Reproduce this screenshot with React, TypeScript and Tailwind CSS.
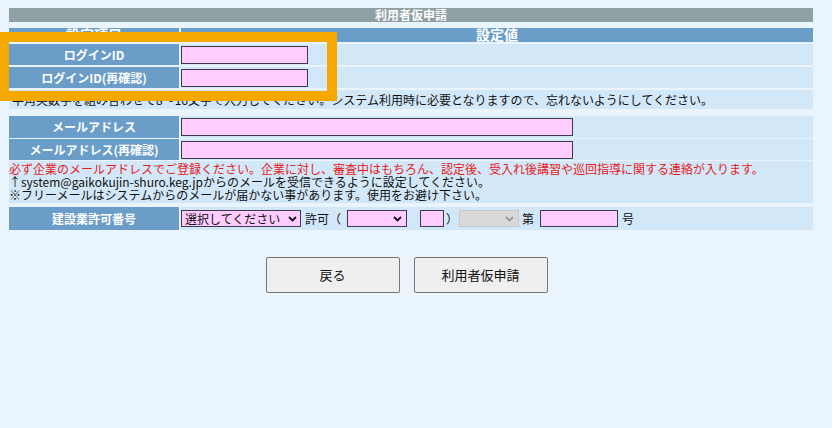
import React from 'react';

const FONT = { fontFamily: '"Noto Sans CJK JP", "Noto Sans", sans-serif' };

const Chevron: React.FC<{ color?: string }> = ({ color = '#111' }) => (
  <svg width="9" height="6" viewBox="0 0 9 6" className="shrink-0">
    <path d="M1 1 L4.5 4.5 L8 1" fill="none" stroke={color} strokeWidth="1.8" />
  </svg>
);

const PinkInput: React.FC<{ className?: string }> = ({ className = '' }) => (
  <div className={`h-[18px] border border-[#3c3a4c] bg-[#ffccff] ${className}`} />
);

const LabelCell: React.FC<{ children: React.ReactNode }> = ({ children }) => (
  <div className="w-[170px] shrink-0 bg-[#6a9ec8] flex items-center justify-center text-white font-bold text-[12px] leading-none">
    {children}
  </div>
);

const Row: React.FC<{ label: string; h: string; children: React.ReactNode }> = ({ label, h, children }) => (
  <div className={`flex gap-[2px] ${h}`}>
    <LabelCell>{label}</LabelCell>
    <div className="flex-1 bg-[#d2e7f8] flex items-center">{children}</div>
  </div>
);

export default function App() {
  return (
    <div className="relative w-[832px] h-[428px] bg-[#eaf4fd] overflow-hidden text-[#111]" style={FONT}>
      <div className="w-[804px] ml-[9px] pt-[8px] flex flex-col">
        {/* タイトル */}
        <div className="h-[14px] bg-[#8fa1a5] text-white font-bold text-[12px] leading-[14px] text-center">
          利用者仮申請
        </div>

        {/* ログインID */}
        <div className="mt-[6px] flex flex-col gap-[2px]">
          <div className="flex gap-[2px] h-[14px]">
            <div className="w-[170px] shrink-0 bg-[#6a9ec8] text-white font-bold text-[14px] leading-[12px] text-center">
              設定項目
            </div>
            <div className="flex-1 bg-[#6a9ec8] text-white font-bold text-[14px] leading-[12px] text-center">
              設定値
            </div>
          </div>
          <Row label="ログインID" h="h-[21px]">
            <PinkInput className="w-[127px]" />
          </Row>
          <Row label="ログインID(再確認)" h="h-[21px]">
            <PinkInput className="w-[127px]" />
          </Row>
          <div className="h-[19px] bg-[#d2e7f8] pl-[3px] text-[12px] leading-[19px] whitespace-nowrap">
            半角英数字を組み合わせて8～16文字で入力してください。システム利用時に必要となりますので、忘れないようにしてください。
          </div>
        </div>

        {/* メールアドレス */}
        <div className="mt-[7px] flex flex-col gap-[1px]">
          <Row label="メールアドレス" h="h-[22px]">
            <PinkInput className="w-[392px]" />
          </Row>
          <Row label="メールアドレス(再確認)" h="h-[21px]">
            <PinkInput className="w-[392px]" />
          </Row>
          <div className="h-[42px] bg-[#d2e7f8] pt-[1px] text-[12px] leading-[13px] whitespace-nowrap">
            <div className="text-[#e61a1a]">
              必ず企業のメールアドレスでご登録ください。企業に対し、審査中はもちろん、認定後、受入れ後講習や巡回指導に関する連絡が入ります。
            </div>
            <div>↑system@gaikokujin-shuro.keg.jpからのメールを受信できるように設定してください。</div>
            <div>※フリーメールはシステムからのメールが届かない事があります。使用をお避け下さい。</div>
          </div>
        </div>

        {/* 建設業許可番号 */}
        <div className="mt-[4px] flex gap-[2px] h-[23px]">
          <LabelCell>建設業許可番号</LabelCell>
          <div className="flex-1 bg-[#d2e7f8] flex items-center text-[12px] leading-none">
            <div className="w-[120px] h-[17px] border border-[#3c3a4c] bg-[#ffccff] flex items-center justify-between pl-[3px] pr-[3px]">
              <span>選択してください</span>
              <Chevron />
            </div>
            <span className="ml-[4px]">許可（</span>
            <div className="ml-[6px] w-[60px] h-[17px] border border-[#3c3a4c] bg-[#ffccff] flex items-center justify-end pr-[4px]">
              <Chevron />
            </div>
            <PinkInput className="ml-[13px] w-[24px] !h-[17px]" />
            <span className="ml-[2px]">）</span>
            <div className="ml-[1px] w-[60px] h-[17px] border border-[#c8c8c8] bg-[#d9d9d9] flex items-center justify-end pr-[4px]">
              <Chevron color="#9a9a9a" />
            </div>
            <span className="ml-[3px]">第</span>
            <PinkInput className="ml-[6px] w-[78px] !h-[17px]" />
            <span className="ml-[4px]">号</span>
          </div>
        </div>
      </div>

      {/* ボタン */}
      <div className="w-[813px] mt-[27px] flex justify-center gap-[14px]">
        <button className="w-[134px] h-[36px] border border-[#767676] bg-[#efefef] rounded-[2px] text-[13px] text-[#111]">
          戻る
        </button>
        <button className="w-[134px] h-[36px] border border-[#767676] bg-[#efefef] rounded-[2px] text-[13px] text-[#111]">
          利用者仮申請
        </button>
      </div>

      {/* 強調枠 */}
      <div className="absolute left-[-1px] top-[32px] w-[338px] h-[69px] border-[10px] border-[#f5a800] pointer-events-none" />
    </div>
  );
}
